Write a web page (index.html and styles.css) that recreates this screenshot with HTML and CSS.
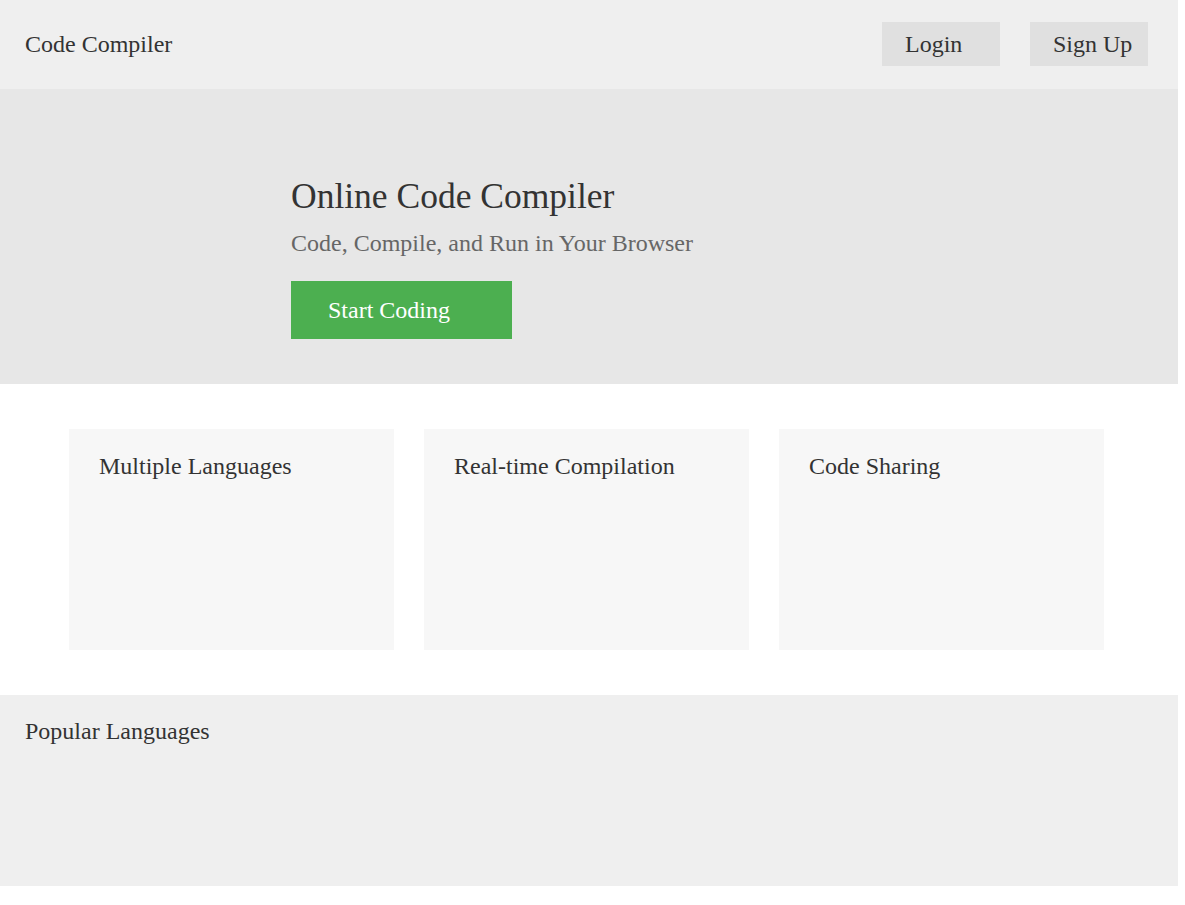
FILE: index.html
```html
<!DOCTYPE html>
<html>
<head>
<meta charset="utf-8">
<link rel="stylesheet" href="styles.css">
</head>
<body>
<div class="page">
  <header class="header">
    <div class="logo">Code Compiler</div>
    <nav class="nav">
      <button class="nav-btn">Login</button>
      <button class="nav-btn">Sign Up</button>
    </nav>
  </header>
  <section class="hero">
    <div class="hero-inner">
      <h1 class="hero-title">Online Code Compiler</h1>
      <p class="hero-sub">Code, Compile, and Run in Your Browser</p>
      <button class="cta">Start Coding</button>
    </div>
  </section>
  <section class="features">
    <div class="card"><h3 class="card-title">Multiple Languages</h3></div>
    <div class="card"><h3 class="card-title">Real-time Compilation</h3></div>
    <div class="card"><h3 class="card-title">Code Sharing</h3></div>
  </section>
  <section class="popular">
    <h2 class="popular-title">Popular Languages</h2>
  </section>
</div>
</body>
</html>
```
FILE: styles.css
```css
html, body {
  margin: 0;
  padding: 0;
  background: #ffffff;
}
body {
  font-family: "Liberation Serif", "Times New Roman", serif;
  color: #333333;
}
.page {
  width: 1178px;
}
.header {
  height: 89px;
  background: #efefef;
  display: flex;
  align-items: flex-start;
  justify-content: space-between;
  padding: 22px 30px 0 25px;
  box-sizing: border-box;
}
.logo {
  font-size: 24px;
  line-height: 44px;
}
.nav {
  display: flex;
  gap: 30px;
}
.nav-btn {
  width: 118px;
  height: 44px;
  border: none;
  background: #e0e0e0;
  font-family: inherit;
  font-size: 24px;
  color: #333333;
  text-align: left;
  padding: 0 0 0 23px;
}
.hero {
  height: 295px;
  background: #e7e7e7;
  box-sizing: border-box;
  padding-top: 85px;
}
.hero-inner {
  width: 596px;
  margin: 0 auto;
}
.hero-title {
  margin: 0;
  font-size: 35.5px;
  font-weight: normal;
  line-height: 44px;
}
.hero-sub {
  margin: 11px 0 0;
  font-size: 24px;
  line-height: 28px;
  color: #666666;
}
.cta {
  display: block;
  margin-top: 24px;
  width: 221px;
  height: 58px;
  border: none;
  background: #4caf50;
  color: #ffffff;
  font-family: inherit;
  font-size: 24px;
  text-align: left;
  padding: 0 0 0 37px;
}
.features {
  display: grid;
  grid-template-columns: repeat(3, 325px);
  gap: 30px;
  padding: 45px 0 45px 69px;
}
.card {
  height: 221px;
  background: #f7f7f7;
  padding: 23px 30px;
  box-sizing: border-box;
}
.card-title {
  margin: 0;
  font-size: 24px;
  font-weight: normal;
  line-height: 28px;
}
.popular {
  height: 191px;
  background: #efefef;
  padding: 22px 25px;
  box-sizing: border-box;
}
.popular-title {
  margin: 0;
  font-size: 24px;
  font-weight: normal;
  line-height: 28px;
}
```
